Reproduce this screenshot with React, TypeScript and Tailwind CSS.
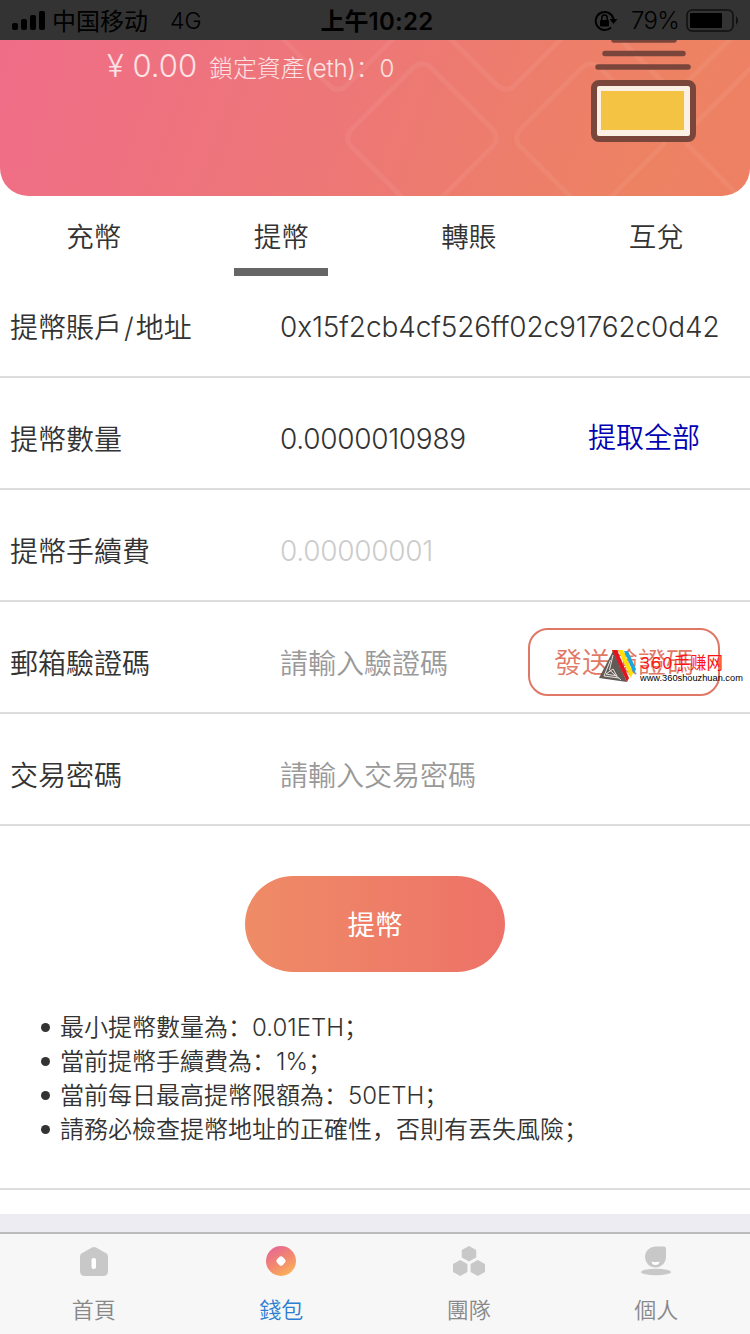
import type { ReactNode } from "react";

const StatusBar = () => (
  <div className="grid h-10 shrink-0 grid-cols-3 items-center bg-[#333333] pt-px text-[24px] text-black">
    <div className="flex items-center pl-3">
      <svg width="34" height="22" viewBox="0 0 34 22" className="shrink-0">
        <rect x="0" y="13" width="6" height="7" rx="2" />
        <rect x="9" y="9" width="6" height="11" rx="2" />
        <rect x="18" y="5" width="6" height="15" rx="2" />
        <rect x="27" y="1" width="6" height="19" rx="2" />
      </svg>
      <span className="ml-1.5 pt-0.5 whitespace-nowrap">中国移动</span>
      <span className="ml-[22px] pt-0.5 text-[23px] font-[350]">4G</span>
    </div>
    <div className="pt-0.5 pl-1 text-center font-semibold whitespace-nowrap">
      上午<span className="tracking-[0.3px]">10:22</span>
    </div>
    <div className="flex items-center justify-end pr-2.5">
      <svg width="25" height="22" viewBox="0 0 25 22" className="mr-3 shrink-0">
        <path
          d="M17 17.500A9 9 0 1 1 19.500 9"
          fill="none"
          stroke="#000"
          strokeWidth="2"
        />
        <path d="M15.500 9h8l-4 5z" />
        <rect x="6" y="10" width="9" height="6.500" rx="1" />
        <path
          d="M7.800 10V7.800a2.700 2.700 0 0 1 5.400 0V10"
          fill="none"
          stroke="#000"
          strokeWidth="1.500"
        />
      </svg>
      <span className="mr-[7px] pt-px text-[24px] font-[350] tracking-[-0.7px]">
        79%
      </span>
      <svg width="54" height="24" viewBox="0 0 54 24" className="shrink-0">
        <rect
          x="1"
          y="1"
          width="46"
          height="21"
          rx="5"
          fill="none"
          stroke="#111"
          strokeWidth="1.600"
        />
        <rect x="4" y="4" width="32" height="15" rx="1" />
        <path d="M50 7q4 4.500 0 9z" fill="#111" />
      </svg>
    </div>
  </div>
);

// centres of the rotated squares behind the balance
const diamonds = [
  [338, -25],
  [506, -25],
  [675, -25],
  [422, 98],
  [591, 98],
  [760, 98],
];

const BalanceCard = () => (
  <div className="relative h-[156px] shrink-0 overflow-hidden rounded-b-[28px] bg-[linear-gradient(110deg,#f06d88_0%,#ed7777_45%,#ed8263_85%,#ee8064_100%)]">
    <svg
      className="absolute inset-0"
      width="750"
      height="156"
      viewBox="0 0 750 156"
      fill="none"
      stroke="#fff"
      strokeOpacity="0.06"
      strokeWidth="5"
    >
      {diamonds.map(([x, y]) => (
        <rect
          key={`${x}-${y}`}
          x={x - 56}
          y={y - 56}
          width="112"
          height="112"
          rx="12"
          transform={`rotate(45 ${x} ${y})`}
        />
      ))}
    </svg>
    <div className="relative flex items-baseline pt-[7px] pl-[107px] font-light whitespace-nowrap text-white/80">
      <span className="text-[31px] leading-[38px]">¥ 0.00</span>
      <span className="ml-3 text-[24px] tracking-[-0.15px]">鎖定資產(eth)：0</span>
    </div>
    <svg
      className="absolute top-0 left-[590px]"
      width="108"
      height="104"
      viewBox="0 0 108 104"
    >
      <g stroke="#7a453a" strokeWidth="5.500" strokeLinecap="round">
        <path d="M24 0h60M15 13.500h78M8 27h90" />
      </g>
      <rect
        x="4"
        y="43"
        width="99"
        height="56"
        rx="5"
        fill="#fcf0e4"
        stroke="#7a453a"
        strokeWidth="6"
      />
      <rect x="11" y="51" width="83" height="39" fill="#f4c343" />
    </svg>
  </div>
);

const tabs = ["充幣", "提幣", "轉賬", "互兌"];

const Tabs = () => (
  <div className="grid h-20 shrink-0 grid-cols-4 text-center text-[27.5px] leading-[82px] font-[350]">
    {tabs.map((tab, i) => (
      <div key={tab} className="flex flex-col items-center">
        <span className="h-[72px]">{tab}</span>
        {i === 1 && <span className="h-2 w-[94px] bg-[#666666]" />}
      </div>
    ))}
  </div>
);

const Row = ({ label, children }: { label: ReactNode; children: ReactNode }) => (
  <div className="flex h-28 items-center border-b-2 border-[#dddddd] pt-2.5 pr-[30px] pl-2.5 text-[28px] font-[350] whitespace-nowrap">
    <span className="w-[270px] shrink-0 pt-1">{label}</span>
    {children}
  </div>
);

const SiteMark = () => (
  <div className="absolute top-[20px] left-[69px] flex items-center">
    <svg width="38" height="34" viewBox="0 0 38 34">
      <path d="M14 1L28 32L0 28Z" fill="#625a57" />
      <path
        d="M14 5L10.500 20L22 30M11.500 10L5 26L20 28M7 24L14 19L18 26Z"
        stroke="#e8e4e2"
        strokeWidth="1"
        fill="none"
      />
      <path d="M13 0h5l12 28-2 4z" fill="#e3141d" />
      <path d="M19 0h5l10 23-2 5z" fill="#ffe000" />
      <path d="M25 1h4l8 18-2 5z" fill="#1aa7dd" />
    </svg>
    <div className="flex flex-col pt-[5px] pl-[3px]">
      <span className="text-[16.5px] leading-[17px] font-normal text-[#ff1515]">
        <span className="tracking-[0.9px]">360</span>手赚网
      </span>
      <span className="font-['Liberation_Sans',sans-serif] text-[9.25px] leading-[12px] text-black">
        www.360shouzhuan.com
      </span>
    </div>
  </div>
);

const notes = [
  "最小提幣數量為：0.01ETH；",
  "當前提幣手續費為：1%；",
  "當前每日最高提幣限額為：50ETH；",
  "請務必檢查提幣地址的正確性，否則有丟失風險；",
];

const HomeIcon = () => (
  <svg width="30" height="30" viewBox="0 0 30 30" fill="#c8c8c8">
    <path d="M13 1.500q2-1 4 0l10.500 6q1.500 1 1.500 3v14.500q0 5-5 5h-18q-5 0-5-5v-14.500q0-2 1.500-3z" />
    <rect x="12.500" y="12" width="4.500" height="11" rx="2" fill="#fff" />
  </svg>
);

const WalletIcon = () => (
  <svg width="30" height="30" viewBox="0 0 30 30">
    <defs>
      <linearGradient id="wallet" x1="0.2" y1="0" x2="0.8" y2="1">
        <stop offset="0" stopColor="#e66694" />
        <stop offset="0.5" stopColor="#f28770" />
        <stop offset="1" stopColor="#fbb757" />
      </linearGradient>
    </defs>
    <circle cx="15" cy="15" r="15" fill="url(#wallet)" />
    <rect
      x="11"
      y="11"
      width="8"
      height="8"
      rx="2.500"
      transform="rotate(45 15 15)"
      fill="#fff"
    />
  </svg>
);

const TeamIcon = () => (
  <svg width="32" height="30" viewBox="0 0 32 30" fill="#c8c8c8">
    <path d="M16 0l7.200 4v7.600L16 15.600l-7.200-4V4z" />
    <path d="M7.200 14l7.200 4v8l-7.200 4L0 26v-8z" />
    <path d="M24.800 14l7.200 4v8l-7.200 4-7.200-4v-8z" />
  </svg>
);

const UserIcon = () => (
  <svg width="30" height="30" viewBox="0 0 30 30" fill="#c8c8c8">
    <path d="M15 0.500h8q2 0 2 2v8.500A10.500 10.500 0 1 1 15 0.500z" />
    <path d="M10.500 15.500q4 1.500 8 0-.5 3.500-4 3.500t-4-3.500z" fill="#fff" />
    <ellipse cx="15" cy="26" rx="15" ry="3.200" />
  </svg>
);

const nav = [
  { label: "首頁", icon: <HomeIcon />, active: false },
  { label: "錢包", icon: <WalletIcon />, active: true },
  { label: "團隊", icon: <TeamIcon />, active: false },
  { label: "個人", icon: <UserIcon />, active: false },
];

const App = () => {
  return (
    <div className="flex h-[1334px] w-[750px] flex-col overflow-hidden bg-white font-[Inter,'Noto_Sans_CJK_SC',sans-serif] text-[#333333]">
      <StatusBar />
      <BalanceCard />
      <Tabs />
      <div className="-mt-[10px] shrink-0">
        <Row
          label={
            <>
              提幣賬戶<span className="mx-[2px]">/</span>地址
            </>
          }
        >
          <span className="flex-1 overflow-hidden pt-0.5 tracking-[-0.12px]">
            0x15f2cb4cf526ff02c91762c0d429
          </span>
        </Row>
        <Row label="提幣數量">
          <span className="flex-1 pt-0.5 tracking-[-0.3px]">0.0000010989</span>
          <span className="mr-5 text-[#0000b4]">提取全部</span>
        </Row>
        <Row label="提幣手續費">
          <span className="pt-0.5 tracking-[-0.3px] text-[#cccccc]">
            0.00000001
          </span>
        </Row>
        <Row label="郵箱驗證碼">
          <span className="flex-1 pt-1 text-[#999999]">請輸入驗證碼</span>
          <div className="relative flex h-[68px] w-48 items-center justify-center rounded-[20px] border-2 border-[#e07866] pt-0.5 text-[#e07866]">
            發送驗證碼
            <SiteMark />
          </div>
        </Row>
        <Row label="交易密碼">
          <span className="pt-1 text-[#999999]">請輸入交易密碼</span>
        </Row>
      </div>
      <button className="mx-auto mt-[50px] h-24 w-[260px] shrink-0 rounded-full bg-linear-to-r from-[#ef8b66] to-[#ed7268] pt-1 text-[27.5px] text-white">
        提幣
      </button>
      <ul className="mt-[39px] h-[177px] shrink-0 pl-[41px] text-[24px] leading-[34px] font-[350]">
        {notes.map((note) => (
          <li key={note} className="flex items-center whitespace-nowrap">
            <span className="mr-2.5 mb-0.5 size-[9px] rounded-full bg-[#333333]" />
            {note}
          </li>
        ))}
      </ul>
      <div className="h-[26px] shrink-0 border-t-2 border-[#dddddd]" />
      <div className="h-[18px] shrink-0 bg-[#edecf2]" />
      <div className="grid h-[102px] shrink-0 grid-cols-4 border-t-2 border-[#bbbbbb] bg-[#f7f7f7]">
        {nav.map(({ label, icon, active }) => (
          <div key={label} className="flex flex-col items-center pt-3">
            {icon}
            <span
              className={
                active
                  ? "mt-4 text-[22px] leading-9 font-[350] text-[#2d7dd2]"
                  : "mt-4 text-[22px] leading-9 font-[350] text-[#888888]"
              }
            >
              {label}
            </span>
          </div>
        ))}
      </div>
    </div>
  );
};

export default App;
